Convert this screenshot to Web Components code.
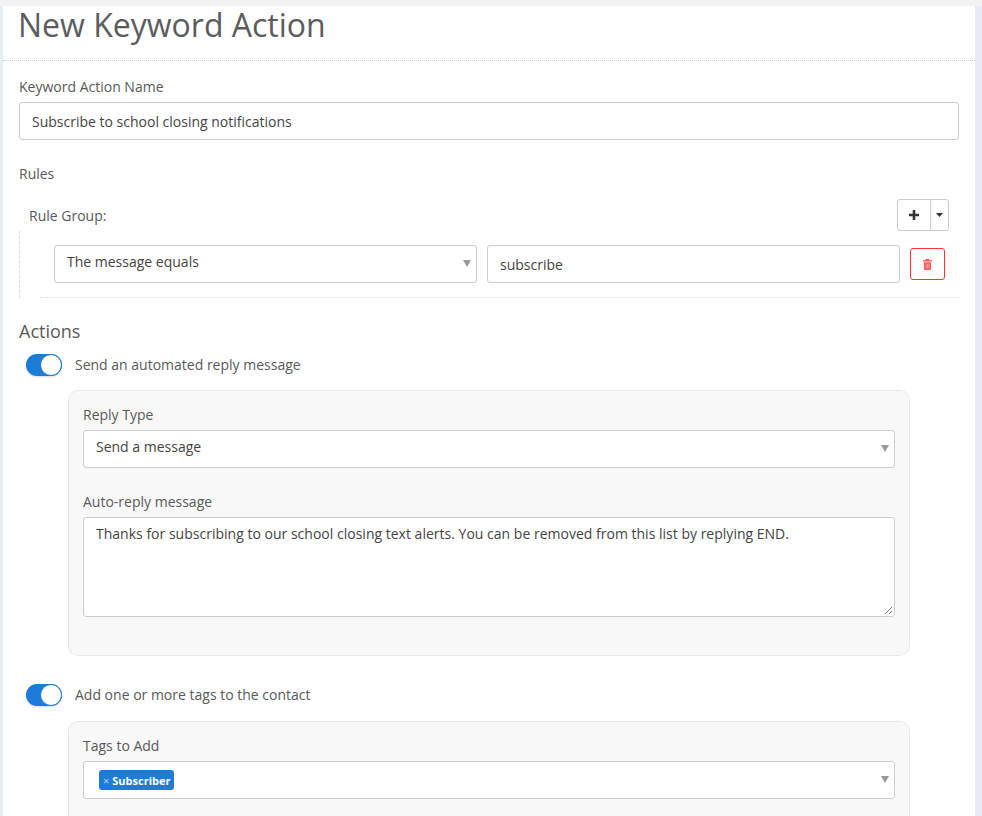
<!DOCTYPE html>
<html><head><meta charset="utf-8"><style>
html,body{margin:0;padding:0;height:816px;overflow:hidden;background:#e9edf3}
body{font-family:"Open Sans",sans-serif;font-size:14px;color:#58595b}
ka-page{height:816px}
</style></head><body>
<ka-page>
  <ka-field label="Keyword Action Name" style="margin:0 0 24px"><ka-control value="Subscribe to school closing notifications"></ka-control></ka-field>
  <ka-rules></ka-rules>
  <ka-section-title>Actions</ka-section-title>
  <ka-toggle>Send an automated reply message</ka-toggle>
  <ka-panel style="height:266px;margin:14px 0 28px 49px">
    <ka-field label="Reply Type" style="margin-bottom:24px"><ka-control select lift value="Send a message"></ka-control></ka-field>
    <ka-field label="Auto-reply message"><ka-textarea>Thanks for subscribing to our school closing text alerts. You can be removed from this list by replying END.</ka-textarea></ka-field>
  </ka-panel>
  <ka-toggle>Add one or more tags to the contact</ka-toggle>
  <ka-panel style="height:200px;margin:15px 0 0 49px">
    <ka-field label="Tags to Add"><ka-control select><ka-tag>Subscriber</ka-tag></ka-control></ka-field>
  </ka-panel>
</ka-page>
<script>
function def(name, html){
  customElements.define(name, class extends HTMLElement{
    constructor(){super();const r=this.attachShadow({mode:'open'});r.innerHTML=typeof html==='function'?html(this):html;}
  });
}
def('ka-page',`<style>
:host{display:block;box-sizing:border-box;padding:6px 7px 0 3px;background:linear-gradient(#f2f2f2 6px,transparent 6px);overflow:hidden}
.card{background:#fff;height:810px}
h1{margin:0;font:400 32px/38px "Open Sans",sans-serif;color:#5b5c5e;box-sizing:border-box;padding:0 0 0 15px;border-bottom:1px dotted #c9c9c9;height:55px}
.body{padding:16px 16px 0 16px}
</style><div class="card"><h1>New Keyword Action</h1><div class="body"><slot></slot></div></div>`);
def('ka-field',e=>`<style>
:host{display:block}
label{display:block;font-size:14px;line-height:19px;color:#58595b;margin-bottom:6px}
</style><label>${e.getAttribute('label')}</label><slot></slot>`);
def('ka-control',e=>`<style>
:host{display:flex;align-items:center;box-sizing:border-box;height:38px;border:1px solid #ccc;border-radius:3px;background:#fff;padding:0 12px;font-size:14px;color:#444;position:relative}
.v{position:relative}
:host([lift]) .v{top:-3px}
.a{position:absolute;right:5px;top:14px;width:0;height:0;border:4px solid transparent;border-top:7px solid #999;border-bottom:0}
::slotted(ka-tag){margin-left:3px}
</style><span class="v">${e.getAttribute('value')||''}</span><slot></slot>${e.hasAttribute('select')?'<i class="a"></i>':''}`);
def('ka-textarea',`<style>
:host{display:block;box-sizing:border-box;height:100px;border:1px solid #ccc;border-radius:3px;background:#fff;padding:6px 12px;font-size:14px;line-height:20px;color:#444;position:relative;letter-spacing:.01px}
svg{position:absolute;right:1px;bottom:1px}
</style><slot></slot><svg width="9" height="9" viewBox="0 0 9 9"><path d="M8 1L1 8M8 5L5 8" stroke="#777" stroke-width="1" fill="none"/></svg>`);
def('ka-rules',`<style>
:host{display:block}
.t{line-height:19px;margin-bottom:16px}
.head{display:flex;justify-content:space-between;align-items:center;padding:0 10px;height:32px}
.split{display:flex;height:32px;box-sizing:border-box;border:1px solid #ccc;border-radius:3px;width:52px;color:#333}
.split b{display:flex;align-items:center;justify-content:center;flex:1}
.split b+b{flex:0 0 17px;border-left:1px solid #ccc}
.row{display:flex;gap:10px;align-items:center;padding:14px 15px 14px 34px;height:38px}
.wrap{border-left:1px dashed #ddd;height:67px}
.sel{flex:0 0 423px}
.inp{flex:0 0 413px}
.del{flex:0 0 35px;height:32px;box-sizing:border-box;border:1px solid #f33;border-radius:3px;display:flex;align-items:center;justify-content:center}
.line{border-bottom:1px dotted #ddd;margin:-1px -1px 0 21px}
</style><div class="t">Rules</div>
<div class="head"><span>Rule Group:</span>
<div class="split"><b><svg width="10" height="10" viewBox="0 0 10 10"><path d="M5 0v10M0 5h10" stroke="#333" stroke-width="2.6"/></svg></b><b><svg width="7" height="4" viewBox="0 0 7 4"><path d="M0 0h7L3.500 4z" fill="#333"/></svg></b></div></div>
<div class="wrap"><div class="row"><ka-control class="sel" select lift value="The message equals"></ka-control><ka-control class="inp" value="subscribe"></ka-control>
<div class="del"><svg width="9" height="11" viewBox="0 0 9 11"><path d="M3 0h3l.5 1.300H9v1.200H0V1.300h2.500z" fill="#f55"/><path d="M1 3.200h7V10a1 1 0 0 1-1 1H2a1 1 0 0 1-1-1z" fill="#f55"/><path d="M3 4.500v5M4.500 4.500v5M6 4.500v5" stroke="#fbb" stroke-width=".7"/></svg></div></div></div>
<div class="line"></div>`);
def('ka-section-title',`<style>:host{display:block;font-size:18px;line-height:24px;color:#58595b;margin:21px 0 11px}</style><slot></slot>`);
def('ka-toggle',`<style>
:host{display:flex;align-items:center;gap:13px;padding-left:7px;height:22px;font-size:14px;color:#58595b}
.s{width:36px;height:22px;box-sizing:border-box;border-radius:11px;background:#1c7cd9;position:relative;box-shadow:0 1px 2px rgba(0,0,0,.15)}
.s i{position:absolute;right:0;top:0;width:22px;height:22px;box-sizing:border-box;border-radius:50%;background:#fff;border:1px solid #1c7cd9}
.l{position:relative;top:-1px}
</style><span class="s"><i></i></span><span class="l"><slot></slot></span>`);
def('ka-panel',`<style>
:host{display:block;box-sizing:border-box;width:842px;background:#f8f8f8;border:1px dotted #dadada;border-radius:10px;padding:14px 14px 0 14px}
</style><slot></slot>`);
def('ka-tag',`<style>
:host{display:inline-flex;align-items:center;height:20px;box-sizing:border-box;padding:0 4px;background:#1c7cd9;border-radius:3px;color:#fff;font-size:11px;font-weight:700;gap:3px}
i{font-style:normal;font-weight:400;color:#b5d5f5;font-size:11px}
</style><i>×</i><slot></slot>`);
</script>
</body></html>
